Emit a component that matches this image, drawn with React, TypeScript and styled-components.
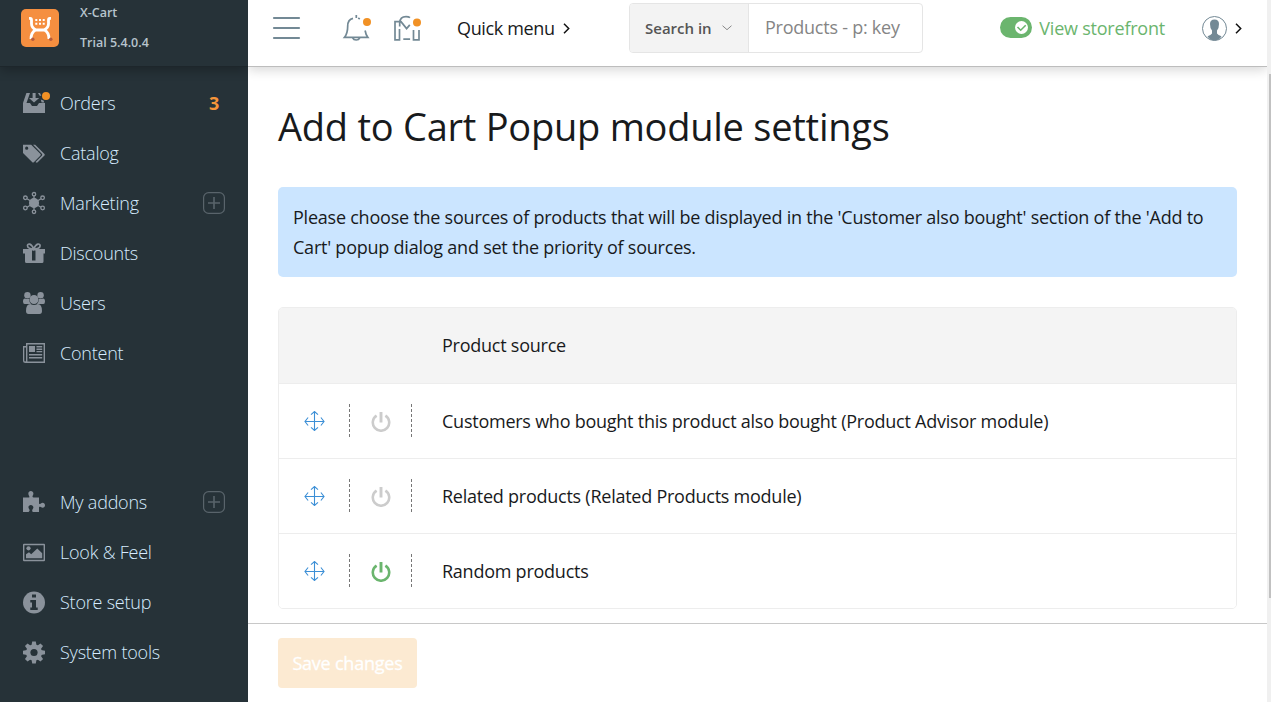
import React from "react";
import styled, { createGlobalStyle } from "styled-components";

const GlobalStyle = createGlobalStyle`
  * { box-sizing: border-box; }
  html, body { margin: 0; height: 100%; overflow: hidden; background: #fff; }
  body { font-family: "Open Sans", sans-serif; font-size: 18px; letter-spacing: -0.245px; color: #181a1c; }
`;

const Page = styled.div`
  display: grid;
  grid-template-columns: 248px 1fr 4px;
  height: 702px;
`;

const Sidebar = styled.aside`
  display: flex;
  flex-direction: column;
  background: #263238;
`;

const Brand = styled.div`
  display: flex;
  height: 67px;
  padding: 9px 21px 0;
  gap: 21px;
  border-bottom: 1px solid #1d262b;
  box-shadow: 0 3px 11px rgba(0, 0, 0, 0.28);
  clip-path: inset(0 0 -14px 0);
`;

const BrandText = styled.div`
  margin-top: -11px;
  font-size: 12.5px;
  font-weight: 600;
  line-height: 30px;
  letter-spacing: 0;
  color: #b7c4cd;
`;

const Nav = styled.nav<{ $top: number }>`
  display: flex;
  flex-direction: column;
  margin-top: ${(p) => p.$top}px;
`;

const NavItem = styled.a`
  display: flex;
  align-items: center;
  height: 50px;
  padding: 0 23px;
  font-weight: 300;
  color: #d6ecff;
  letter-spacing: -0.22px;
`;

const NavIcon = styled.svg`
  width: 28px;
  height: 22px;
  margin-right: 9px;
  overflow: visible;
  fill: #8a929b;
`;

const NavLabel = styled.span`
  flex: 1;
`;

const Count = styled.span`
  padding-right: 6px;
  font-weight: 700;
  color: #f6953a;
`;

const Expand = styled.svg`
  width: 22px;
  height: 22px;
  fill: none;
  stroke: #59646b;
`;

const Main = styled.div`
  display: flex;
  flex-direction: column;
  min-width: 0;
`;

const Header = styled.header`
  display: flex;
  align-items: center;
  height: 67px;
  padding: 0 25px 10px 25px;
  border-bottom: 1px solid #bdbdbd;
  box-shadow: 0 3px 11px rgba(0, 0, 0, 0.16);
  clip-path: inset(0 0 -14px 0);
`;

const HeaderIcon = styled.svg<{ $w: number; $gap: number }>`
  width: ${(p) => p.$w}px;
  height: 28px;
  margin-right: ${(p) => p.$gap}px;
  flex: none;
  overflow: visible;
  fill: none;
  stroke: #738995;
  stroke-width: 1.7;
`;

const QuickMenu = styled.div`
  display: flex;
  align-items: center;
  width: 172px;
  gap: 8px;
  letter-spacing: -0.36px;
  white-space: nowrap;
`;

const Chevron = styled.svg`
  width: 7px;
  height: 12px;
  fill: none;
  stroke: #111;
  stroke-width: 1.5;
`;

const Search = styled.div`
  display: flex;
  width: 294px;
  height: 50px;
  border: 1px solid #e5e5e5;
  border-radius: 4px;
  overflow: hidden;
`;

const SearchScope = styled.div`
  display: flex;
  align-items: center;
  width: 119px;
  padding-left: 15px;
  gap: 10px;
  background: #f3f3f3;
  border-right: 1px solid #e5e5e5;
  font-size: 15px;
  font-weight: 600;
  letter-spacing: 0;
  color: #555;
`;

const SearchField = styled.div`
  flex: 1;
  padding: 0 16px;
  line-height: 46px;
  color: #858585;
`;

const Storefront = styled.div`
  display: flex;
  align-items: center;
  gap: 7px;
  margin-left: auto;
  margin-right: 37px;
  letter-spacing: -0.22px;
  color: #6bb56e;
`;

const Content = styled.main`
  flex: 1;
  padding: 29px 30px 0;
`;

const Title = styled.h1`
  margin: 0;
  font-size: 38px;
  font-weight: 400;
  line-height: 60px;
  white-space: nowrap;
`;

const Notice = styled.p`
  height: 90px;
  margin: 31px 0 30px;
  padding: 15px;
  border-radius: 5px;
  background: #cbe5ff;
  line-height: 30px;
  letter-spacing: -0.23px;
`;

const Table = styled.div`
  border: 1px solid #ededed;
  border-radius: 5px;
  overflow: hidden;
`;

const Row = styled.div<{ $head?: boolean }>`
  display: grid;
  grid-template-columns: 70px 63px 1fr;
  align-items: center;
  height: 75px;
  padding-bottom: ${(p) => (p.$head ? 2 : 0)}px;
  background: ${(p) => (p.$head ? "#f4f4f4" : "#fff")};
  border-top: ${(p) => (p.$head ? 0 : 1)}px solid #ededed;
`;

const Handle = styled.div`
  display: flex;
  align-items: center;
  justify-content: center;
  width: 71px;
  height: 33px;
  margin-top: -1px;
  padding: 1px 0 0;
  background: repeating-linear-gradient(#777 0 3px, transparent 3px 5px) right / 1px 100% no-repeat;
`;

const Toggle = styled(Handle)`
  width: 63px;
  padding: 3px 0 0 1px;
`;

const Source = styled.div`
  padding-left: 30px;
`;

const Footer = styled.footer`
  height: 79px;
  padding: 14px 30px;
  border-top: 1px solid #c8c8c8;
`;

const SaveButton = styled.button`
  width: 139px;
  height: 50px;
  padding: 0;
  border: 0;
  border-radius: 4px;
  background: #fcead2;
  color: #fff;
  font: 400 18px "Open Sans", sans-serif;
  letter-spacing: -0.22px;
  white-space: nowrap;
  -webkit-text-stroke: 0.3px #fff;
`;

const Track = styled.div`
  padding-top: 74px;
  background: #f0f0f0;
`;

const Thumb = styled.div`
  width: 2px;
  height: 524px;
  margin-left: 2px;
  background: #c1c1c1;
`;

const icons: Record<string, React.ReactNode> = {
  Orders: (
    <>
      <path d="M3.4 1H7L3.5 11H7l2 3h5l2-3h6v10H0V11z" />
      <path d="M9.6 1h3v5h3.6L11 10.5 6 6h3.6zM15 1h2l1.4 3-2-.6zM18.6 10.5l-.8-3 2.7 1 .8 2z" />
      <circle cx="23" cy="4" r="4" fill="#f19125" />
    </>
  ),
  Catalog: (
    <>
      <path fillRule="evenodd" d="M0 2.8h8.2L17.5 12q.7.7 0 1.4l-6.7 6.8q-.8.7-1.5 0L0 11zm3.7 1.8a1.6 1.6 0 100 3.2 1.6 1.6 0 000-3.2z" />
      <path d="M10 2.8h2.2l9.3 9.3q.6.7 0 1.4l-6.8 6.8q-.9.7-1.8 0l-.4-.4 6.5-6.5q.5-.7 0-1.4z" />
    </>
  ),
  Marketing: (
    <>
      <circle cx="11" cy="11" r="5" />
      <g fill="none" stroke="#8a929b" strokeWidth="1.3">
        <path d="M11 3v16M4 6.800l14 8.400M4 15.200l14-8.400" />
        <g fill="#263238">
          <circle cx="11" cy="2.200" r="1.700" />
          <circle cx="11" cy="19.800" r="1.700" />
          <circle cx="2.400" cy="5.800" r="1.800" />
          <circle cx="19.600" cy="5.800" r="1.800" />
          <circle cx="2.400" cy="16" r="1.800" />
          <circle cx="19.600" cy="16" r="1.800" />
        </g>
      </g>
      <circle cx="11" cy="11" r="4.600" />
    </>
  ),
  Discounts: (
    <>
      <path d="M0 7h22v4.500h-1.500v8q0 1.500-1.500 1.500H3.500Q2 21 2 19.500v-8H0z" />
      <path d="M9 8.500h3.500v10H9z" fill="#263238" />
      <path d="M10.700 7C8 7 4.500 6 4.500 3.700S8 .6 10.700 7c2.700-6.400 6.400-5.600 6.400-3.300S13.500 7 10.700 7z" fill="none" stroke="#8a929b" strokeWidth="1.700" />
    </>
  ),
  Users: (
    <>
      <circle cx="4.400" cy="3.300" r="3.200" />
      <circle cx="17.600" cy="3.300" r="3.200" />
      <path d="M0 9.500Q0 6.500 2 6.500q2.500 1 4 .3.300 3.600 2 5.200H1.700Q0 12 0 9.500zM22 9.500q0-3-2-3-2.500 1-4 .3-.3 3.600-2 5.200h6.300q1.700 0 1.700-2.500z" />
      <circle cx="11" cy="7.500" r="4.500" />
      <path d="M3 19q0-7 4.400-7 3.600 2 7.200 0Q19 12 19 19q0 3-2.500 3h-11Q3 22 3 19z" />
    </>
  ),
  Content: (
    <>
      <path fillRule="evenodd" d="M3 1h19v20H2.500Q0 21 0 18.500V4h3zm0 4.500H1.300v13q0 1 .9 1t.8-1zm1.400-3v17h16.200v-17z" />
      <path d="M6 4h6v6H6zM13.500 4h5.700v1.400h-5.700zM13.500 6.600h5.700V8h-5.700zM13.500 9h5.700v1.300h-5.700zM6 12h13.200v1.400H6zM6 15h13.200v1.400H6z" />
    </>
  ),
  "My addons": (
    <path d="M0 6.500h5.500q1.400 0 .6-1.500C4.400 2 5.800 0 7.800 0s3.500 2 2 4.600c-.8 1.400.1 1.900 1.400 1.900H16v5c0 1.700.6 2 1.800 1 2-1.500 4.200-.4 4.200 1.700s-2 3.400-4.200 1.900c-1.200-.8-1.800-.5-1.800 1V21H9.800c-1-1.300-.8-2 .1-3.200 1.300-2-.2-3.800-2.100-3.800s-3.200 2-1.700 4c.8 1.100.8 2-.5 3H0z" />
  ),
  "Look & Feel": (
    <g transform="translate(0 .5)">
      <path fillRule="evenodd" d="M1 2.200h20q1 0 1 1v15.600q0 1-1 1H1q-1 0-1-1V3.200q0-1 1-1zm.4 1.500v14.600h19.200V3.700z" />
      <circle cx="5.500" cy="6.800" r="2.100" />
      <path d="M3 16.800v-4l3-2 2.200 2L14.300 7l4.900 4.700v5.100z" />
    </g>
  ),
  "Store setup": (
    <g transform="translate(0 .5)">
      <circle cx="11" cy="11" r="11" />
      <path d="M9 3h4v3H9zM7.300 8.500H13V16h1.700v2.500H7.300V16H9v-5H7.300z" fill="#263238" />
    </g>
  ),
  "System tools": (
    <g transform="translate(0 .5)">
      {[0, 45, 90, 135].map((a) => (
        <path key={a} d="M9.200 0h3.600l.7 4v14l-.7 4H9.200l-.7-4V4z" transform={`rotate(${a} 11 11)`} />
      ))}
      <circle cx="11" cy="11" r="8" />
      <circle cx="11" cy="11" r="3.600" fill="#263238" />
    </g>
  ),
};

const Item = ({ label, count, expandable }: { label: string; count?: number; expandable?: boolean }) => (
  <NavItem>
    <NavIcon viewBox="0 0 28 22">{icons[label]}</NavIcon>
    <NavLabel>{label}</NavLabel>
    {count && <Count>{count}</Count>}
    {expandable && (
      <Expand viewBox="0 0 22 22">
        <rect x=".6" y=".6" width="20.800" height="20.800" rx="5" strokeWidth="1.200" />
        <path d="M5 11h12M11 5v12" strokeWidth="1.600" />
      </Expand>
    )}
  </NavItem>
);

const Arrow = () => (
  <Chevron viewBox="0 0 7 12">
    <path d="M1 1.800 5.700 6.500 1 11.200" />
  </Chevron>
);

const MoveIcon = () => (
  <svg width="21" height="20" viewBox="0 0 21 20" fill="none" stroke="#3c8fd6" strokeWidth="1.100">
    <path d="M.5 10.500h20M10.500 .5v19M4.100 6.500 1 10.500l3.100 4M16.900 6.500l3.100 4-3.100 4M7 3.600 10.500 .5 14 3.600M7 16.400l3.500 3.100 3.500-3.100" />
  </svg>
);

const PowerIcon = ({ on }: { on: boolean }) => (
  <svg width="20" height="20" viewBox="0 0 20 20" fill="none" stroke={on ? "#6bb56e" : "#ccc"}>
    <path d="M5.600 3.600a8.200 8.200 0 108.800 0" strokeWidth="2.600" />
    <path d="M10 0v10.500" strokeWidth="2.900" />
  </svg>
);

const sources = [
  { name: "Customers who bought this product also bought (Product Advisor module)", on: false },
  { name: "Related products (Related Products module)", on: false },
  { name: "Random products", on: true },
];

export default function App() {
  return (
    <Page>
      <GlobalStyle />
      <Sidebar>
        <Brand>
          <svg width="38" height="38" viewBox="0 0 38 38">
            <rect width="38" height="38" rx="5" fill="#f58f40" />
            <path d="M8 9.300h1.300q1.200 0 1.200 1.700v3.700q0 4 4.500 6.300h8q4.500-2.300 4.500-6.300V11q0-1.700 1.200-1.700H30M14.500 21q-4.500 2.500-4.500 9M23.500 21q4.500 2.500 4.500 9" fill="none" stroke="#fff" strokeWidth="2.800" />
            <path d="M14.300 11h9.500M14.300 14.700h9.500" stroke="#fff" strokeWidth="2" strokeDasharray="2 1.700" />
            <circle cx="11.800" cy="30.300" r="1.700" fill="#b65c3c" />
            <circle cx="29.800" cy="30.300" r="1.700" fill="#b65c3c" />
          </svg>
          <BrandText>
            X-Cart
            <br />
            Trial 5.4.0.4
          </BrandText>
        </Brand>
        <Nav $top={11}>
          <Item label="Orders" count={3} />
          <Item label="Catalog" />
          <Item label="Marketing" expandable />
          <Item label="Discounts" />
          <Item label="Users" />
          <Item label="Content" />
        </Nav>
        <Nav $top={99}>
          <Item label="My addons" expandable />
          <Item label="Look & Feel" />
          <Item label="Store setup" />
          <Item label="System tools" />
        </Nav>
      </Sidebar>
      <Main>
        <Header>
          <HeaderIcon $w={27} $gap={43} viewBox="0 0 27 28">
            <path d="M1 4h25M1 14h25M1 24h25" strokeWidth="2.200" strokeLinecap="round" />
          </HeaderIcon>
          <HeaderIcon $w={28} $gap={23} viewBox="0 0 28 28">
            <path d="M13.300 1v3M10 4.300Q4.700 5.500 4.700 12q0 7.500-3.200 11.300h23.300q-2-2.500-2.700-6.800M15 4.300l2 .5M9.700 24q.8 2 3.500 2t3.500-2" />
            <circle cx="24" cy="8" r="4" fill="#f19125" stroke="none" />
          </HeaderIcon>
          <HeaderIcon $w={27} $gap={36} viewBox="0 0 27 28">
            <path d="M5.500 15v10.900H1V7.600h6l5.600 7 3.200-3.700M5.700 12.500V8.800Q6 2.600 12 2.600q2.700 0 4 1M9.300 25.200h6.800M19.500 16v9.900H25V16" />
            <circle cx="23" cy="8.500" r="4" fill="#f19125" stroke="none" />
          </HeaderIcon>
          <QuickMenu>
            Quick menu
            <Arrow />
          </QuickMenu>
          <Search>
            <SearchScope>
              Search in
              <svg width="10" height="6" viewBox="0 0 10 6" fill="none" stroke="#888">
                <path d="m.5.700 4.500 4 4.500-4" />
              </svg>
            </SearchScope>
            <SearchField>Products - p: key</SearchField>
          </Search>
          <Storefront>
            <svg width="32" height="22" viewBox="0 0 32 22">
              <rect width="32" height="21" rx="10.500" fill="#6bb56e" />
              <circle cx="21.500" cy="10.500" r="6.500" fill="#fff" />
              <path d="m17.500 10 3.200 3.200 5-5" fill="none" stroke="#6bb56e" strokeWidth="1.600" />
            </svg>
            View storefront
          </Storefront>
          <HeaderIcon $w={25} $gap={8} viewBox="0 0 25 28">
            <circle cx="12.500" cy="14.500" r="12" strokeWidth="1" />
            <path d="M8 10q0-4.500 4.500-4.500T17 10q0 4.500-2 6.500v3q1 1.500 4.500 2.700-2.500 4.300-7 4.300t-7-4.300Q9 21 10 19.500v-3Q8 14.500 8 10z" fill="#738995" stroke="none" />
          </HeaderIcon>
          <Arrow />
        </Header>
        <Content>
          <Title>Add to Cart Popup module settings</Title>
          <Notice>
            Please choose the sources of products that will be displayed in the 'Customer also bought' section of the 'Add to
            Cart' popup dialog and set the priority of sources.
          </Notice>
          <Table>
            <Row $head>
              <span />
              <span />
              <Source>Product source</Source>
            </Row>
            {sources.map((s) => (
              <Row key={s.name}>
                <Handle>
                  <MoveIcon />
                </Handle>
                <Toggle>
                  <PowerIcon on={s.on} />
                </Toggle>
                <Source>{s.name}</Source>
              </Row>
            ))}
          </Table>
        </Content>
        <Footer>
          <SaveButton disabled>Save changes</SaveButton>
        </Footer>
      </Main>
      <Track>
        <Thumb />
      </Track>
    </Page>
  );
}
